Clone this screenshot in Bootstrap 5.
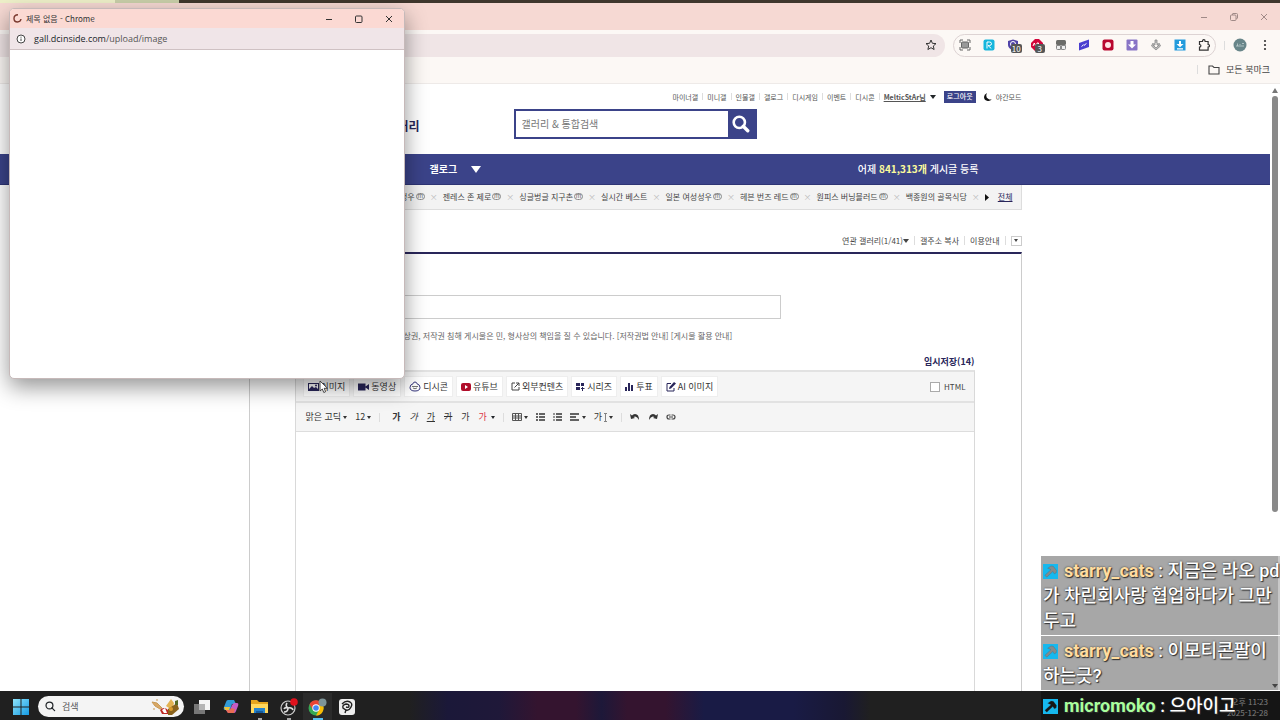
<!DOCTYPE html>
<html lang="ko">
<head>
<meta charset="utf-8">
<meta name="viewport" content="width=device-width, initial-scale=1">
<title>갤러리 글쓰기</title>
<link href="https://cdn.jsdelivr.net/npm/bootstrap@5.3.0/dist/css/bootstrap.min.css" rel="stylesheet">
<style>
:root { --navy:#3b4389; --ink:#29265a; }
body { font-family:"Noto Sans CJK KR",sans-serif; font-size:8px; line-height:12px; color:#444; background:#fff; }
a { color:inherit; text-decoration:none; }
button { border:0; background:none; padding:0; color:inherit; font:inherit; line-height:inherit; }
svg { display:block; flex-shrink:0; }
.wallpaper { height:3px; background:linear-gradient(90deg,#eef0c9 0 9%,#c9cfa9 9% 14%,#3f372d 14%); }
.titlebar { height:27px; background:#f6d9d3; color:#a08a87; padding-right:11px; gap:20px; }
.toolbar { height:30px; background:#fcf8f5; padding-right:9px; color:#333; }
.address { height:23px; border-radius:0 12px 12px 0; background:#f0e5e6; padding-right:8px; }
.extensions { height:23px; border:1px solid #ddd3d3; border-radius:12px; width:263px; padding:0 5px; }
.ext { width:12px; height:12px; position:relative; }
.ext .count { position:absolute; left:4px; top:5px; min-width:10px; height:9px; border-radius:2px; background:#555; color:#fff; font-size:8px; line-height:9px; text-align:center; padding:0 1px; }
.bookmarks { height:24px; background:#fcf8f5; border-bottom:1px solid #eeeae8; padding-right:10px; gap:6px; font-size:9px; }
.vline { width:1px; height:9px; background:#ddd; flex-shrink:0; }
.site-wrap { width:62%; min-width:773px; max-width:773px; }
.site-head { height:70px; }
.toplinks { gap:4px; color:#555; height:25px; font-size:7px; }
.toplinks .vline { height:7px; }
.logout { background:var(--navy); color:#fff; height:12px; width:32px; line-height:11px; font-weight:500; }
.logo { width:171px; color:var(--ink); font-size:12px; font-weight:700; padding-top:3px; }
.search { width:243px; height:30px; border:2px solid var(--navy); margin-left:94px; background:var(--navy); }
.search input { border:0; font-size:10px; padding:0 6px; color:#444; outline:0; border-radius:0; }
.search input::placeholder { color:#777; opacity:1; }
.search button { width:27px; display:grid; place-items:center; }
.mainnav { height:31px; background:var(--navy); border-bottom:1px solid #2e3474; color:#fff; font-size:10px; font-weight:500; }
.mainnav b { color:#fbfb9c; }
.mainnav .entry { padding-left:181px; gap:14px; font-weight:700; }
.mainnav .total { padding-right:43px; }
.recent { height:25px; background:#f3f3f3; border:1px solid #ddd; border-top:0; padding:0 8px; gap:5px; white-space:nowrap; overflow:hidden; }
.recent i { font-style:normal; color:#bbb; }
.mini { display:inline-block; width:9px; height:7px; border:1px solid #888; border-radius:4px; font-size:6px; line-height:4px; text-align:center; margin-left:1px; vertical-align:2px; color:#666; }
.gallery-links { height:42px; padding:23px 0 4px; gap:5px; }
.more { width:11px; height:10px; border:1px solid #ccc; display:grid; place-items:center; }
.board { border:1px solid #ccc; border-top:2px solid var(--ink); border-bottom:0; padding:41px 46px 0 45px; }
.subject { width:486px; height:24px; border:1px solid #ccc; border-radius:0; }
.notice { padding-top:11px; height:36px; color:#666; white-space:nowrap; }
.drafts { color:var(--ink); font-size:9px; font-weight:700; height:15px; line-height:13px; }
.editor { border:1px solid #d9d9d9; border-top:2px solid #e2e2e2; border-bottom:0; }
.attach { background:#f5f5f5; height:31px; gap:3px; padding:0 8px 0 7px; border-bottom:2px solid #e2e2e2; }
.attach button { background:#fff; border:1px solid #eee; height:21px; padding:0 4px; font-size:9px; display:flex; align-items:center; gap:2px; white-space:nowrap; color:#333; }
.attach input { width:10px; height:10px; appearance:none; border:1px solid #aaa; background:#fff; margin:0; }
.format { background:#f5f5f5; height:29px; border-bottom:1px solid #ddd; padding-left:10px; font-size:9px; color:#333; }
.format button { display:flex; align-items:center; gap:2px; white-space:nowrap; }
.letters { gap:9px; }
.caret { width:0; height:0; border:2px solid transparent; border-top:3px solid currentColor; border-bottom:0; flex-shrink:0; }
.caret-lg { border-width:3px; border-top-width:4px; border-bottom:0; }
.track { width:10px; padding:4px 2px 0; gap:3px; background:#fff; }
.thumb { flex:0 0 69%; width:6px; border-radius:3px; background:#898989; }
.popup { position:absolute; left:9px; top:8px; width:396px; height:371px; background:#fff; border:1px solid #c6b9b9; border-radius:5px; box-shadow:0 8px 22px rgba(0,0,0,.42); overflow:hidden; z-index:5; }
.popup-title { height:19px; background:#fbd9d3; color:#333; padding:0 10px 0 3px; gap:4px; }
.popup-url { height:22px; background:#f0e5e8; border-bottom:1px solid #cfc1c3; padding-left:6px; gap:8px; font-size:9px; color:#555; font-family:"Open Sans",sans-serif; }
.window-buttons { gap:20px; }
.pointer { position:absolute; left:319px; top:380px; z-index:8; }
.taskbar { height:29px; background:linear-gradient(90deg,#202020 32%,#1b1839 35%,#1f1839 39%,#34142f 42%,#34142f 45%,#1d1839 47%,#34142f 49%,#34142f 52%,#191b45 55%,#191b45 62%,#191833 66%,#202020 68%); color:#fff; padding:2px 12px 0 13px; }
.tasksearch { width:146px; height:21px; border-radius:11px; background:#f4f4f4; padding:0 4px 0 7px; margin:0 3px 0 9px; gap:6px; }
.tasksearch input { width:70px; border:0; background:transparent; padding:0; font-size:9px; outline:0; }
.tasksearch input::placeholder { color:#555; opacity:1; }
.task { width:29px; height:27px; display:grid; place-items:center; }
.task.running { background:linear-gradient(#aaa,#aaa) center bottom/4px 2px no-repeat; }
.task.current { background:linear-gradient(#58bff0,#58bff0) center bottom/10px 2px no-repeat,#2b2b2b; }
.clock { font-size:8px; line-height:11px; color:#eee; text-align:right; }
.chat { position:absolute; right:0; bottom:0; width:239px; z-index:10; font-family:Roboto,"Noto Sans CJK KR",sans-serif; font-size:18px; line-height:25px; font-weight:500; color:#fff; text-shadow:0 0 2px #333,1px 1px 1px #333; }
.msg { background:#a7a7a7; padding:2px 0 2px 2px; border-right:2px solid #c8c8c8; margin-bottom:1px; white-space:nowrap; }
.msg.dark { background:rgba(10,10,10,.5); height:29px; border:0; margin-bottom:0; }
.msg b { color:#ffdc9f; font-weight:700; }
.msg.dark b { color:#a9ff9d; }
.msg svg { display:inline-block; vertical-align:-2px; margin-right:6px; color:#848b8c; }
.msg.dark svg { color:#161616; }
.chat-scroll { position:absolute; right:2px; bottom:32px; border-width:3px; border-top:4px solid #444; border-bottom:0; }
</style>
<script src="https://cdn.jsdelivr.net/npm/bootstrap@5.3.0/dist/js/bootstrap.bundle.min.js"></script>
</head>
<body class="vh-100 overflow-hidden d-flex flex-column position-relative">
<svg width="0" height="0" class="position-absolute">
<symbol id="hammer" viewBox="0 0 16 16"><path fill="#16b8ee" d="M0 0h16v16H0z"/><path fill="currentColor" stroke="#28536a" stroke-opacity=".5" stroke-width=".500" d="M5 4.500L8.500 2l2.500.500L14.500 7l-.500 2.500-2 1-1.500-2.500L4 14l-2-2 6.500-6z"/></symbol>
<symbol id="glass" viewBox="0 0 16 16"><circle cx="6.500" cy="6.500" r="5" fill="none" stroke="currentColor" stroke-width="var(--s,2.300)"/><path d="M10 10l4 4" stroke="currentColor" stroke-width="var(--s,3)" stroke-linecap="round"/></symbol>
<symbol id="min" viewBox="0 0 10 10"><path d="M2 5.500h6" stroke="currentColor"/></symbol>
<symbol id="close" viewBox="0 0 10 10"><path d="M2 2l6 6M8 2L2 8" stroke="currentColor"/></symbol>
</svg>
<div class="wallpaper flex-shrink-0"></div>
<header class="titlebar d-flex justify-content-end align-items-center flex-shrink-0">
<button aria-label="최소화"><svg width="10" height="10"><use href="#min"/></svg></button>
<button aria-label="복원"><svg width="10" height="10" viewBox="0 0 10 10" fill="none" stroke="currentColor"><rect x="1.500" y="3" width="5.500" height="5.500" rx="1"/><path d="M3.500 3V2q0-.500.500-.500h3.500q1 0 1 1V6q0 .700-1.200.700"/></svg></button>
<button aria-label="닫기"><svg width="10" height="10"><use href="#close"/></svg></button>
</header>
<div class="toolbar d-flex align-items-center flex-shrink-0">
<div class="address flex-grow-1 d-flex justify-content-end align-items-center"><button aria-label="북마크"><svg width="12" height="12" viewBox="0 0 12 12"><path d="M6 1l1.400 3.300 3.600.300-2.700 2.400.800 3.500L6 8.700l-3.100 1.800.800-3.500L1 4.600l3.600-.300z" fill="none" stroke="#333"/></svg></button></div>
<div class="extensions d-flex align-items-center justify-content-between mx-2">
<span class="ext"><svg width="12" height="12" viewBox="0 0 12 12"><path d="M1 4V1h3M8 1h3v3M11 8v3H8M4 11H1V8" fill="none" stroke="#666"/><rect x="2.500" y="3" width="7" height="6" rx="1" fill="#999" stroke="#666"/></svg></span>
<span class="ext"><svg width="12" height="12" viewBox="0 0 12 12"><rect x=".500" y=".500" width="11" height="11" rx="2" fill="#16b6dc"/><path d="M4 9.500V3h2.500q2 0 2 1.700T6.500 6.500H5l3.300 3" fill="none" stroke="#fff"/></svg></span>
<span class="ext"><svg width="12" height="12" viewBox="0 0 12 12"><path d="M1 2l5-1.500L11 2v4q0 3-5 5.500Q1 9 1 6z" fill="#5043a8"/><circle cx="6" cy="5" r="2.500" fill="none" stroke="#fff"/></svg><span class="count">10</span></span>
<span class="ext"><svg width="12" height="12" viewBox="0 0 12 12"><path d="M4 0h4l4 4v4l-4 4H4L0 8V4z" fill="#d2063a"/><path d="M2 7l1.300-3L4.600 7M6 7V4h1.500v3" stroke="#fff" fill="none"/></svg><span class="count">3</span></span>
<span class="ext"><svg width="12" height="12" viewBox="0 0 12 12"><rect x="1" y="1" width="10" height="5" rx="1.500" fill="#6b6b68"/><path d="M1.500 6.500h4v4h-3q-1 0-1-1zM6.500 6.500h4v3q0 1-1 1h-3z" fill="#eee" stroke="#888"/></svg></span>
<span class="ext"><svg width="12" height="12" viewBox="0 0 12 12"><path d="M1 4l10-3.500V8L1 11.500z" fill="#4b3fd0"/><path d="M3.500 7.500l2-1.700.5.600 2.500-2" stroke="#fff" fill="none"/></svg></span>
<span class="ext"><svg width="12" height="12" viewBox="0 0 12 12"><rect x=".500" y=".500" width="11" height="11" rx="2" fill="#b8072f"/><circle cx="6" cy="6" r="3" fill="#ffe3e6"/></svg></span>
<span class="ext"><svg width="12" height="12" viewBox="0 0 12 12"><rect x=".500" y=".500" width="11" height="11" rx="1" fill="#8874c6"/><path d="M4.500 2h3v3.500H10l-4 4-4-4h2.500z" fill="#fff"/></svg></span>
<span class="ext"><svg width="12" height="12" viewBox="0 0 12 12"><path d="M5 1h2v5h2L6 9 3 6h2zM3 4L1.500 7 6 11l4.500-4L9 4" fill="#bbb" stroke="#888" stroke-width=".800"/></svg></span>
<span class="ext"><svg width="12" height="12" viewBox="0 0 12 12"><path fill="#239bdc" d="M.500.500h11v11H.500z"/><path d="M5 2h2v3h2.500L6 8.300 2.500 5H5zM3 9.300h6v1.200H3z" fill="#fff"/></svg></span>
<span class="ext"><svg width="12" height="12" viewBox="0 0 12 12"><path d="M1.500 2.500h3q0-1.800 1.300-1.800t1.300 1.800h3v3q1.400 0 1.400 1.300t-1.400 1.300v3H1.500v-3q1.400 0 1.400-1.300T1.500 5.500z" fill="none" stroke="#333" stroke-width="1.200"/></svg></span>
</div>
<span class="vline"></span>
<button class="ms-2 me-1" aria-label="프로필"><svg width="14" height="14" viewBox="0 0 14 14"><circle cx="7" cy="7" r="6.500" fill="#688589"/><path d="M3 8h3M4.500 8V5.500M7 6v3M8 8h3M9 6l1-1 1 1" stroke="#c2d0d2" fill="none" stroke-width=".800"/></svg></button>
<button class="ms-2" aria-label="메뉴"><svg width="12" height="12" viewBox="0 0 12 12" fill="#333"><circle cx="6" cy="2" r="1.100"/><circle cx="6" cy="6" r="1.100"/><circle cx="6" cy="10" r="1.100"/></svg></button>
</div>
<div class="bookmarks d-flex justify-content-end align-items-center flex-shrink-0 pb-1">
<span class="vline me-1"></span><svg width="12" height="12" viewBox="0 0 12 12"><path d="M1 2h3.500L6 3.500h5v6.500H1z" fill="none" stroke="#444" stroke-width="1.100"/></svg><span>모든 북마크</span>
</div>

<div class="flex-grow-1 d-flex overflow-hidden">
<main class="flex-grow-1 overflow-hidden d-flex flex-column">
<div class="site-wrap mx-auto site-head w-100">
<nav class="toplinks d-flex justify-content-end align-items-center">
<a href="#">마이너갤</a><span class="vline"></span><a href="#">미니갤</a><span class="vline"></span><a href="#">인물갤</a><span class="vline"></span><a href="#">갤로그</a><span class="vline"></span><a href="#">디시게임</a><span class="vline"></span><a href="#">이벤트</a><span class="vline"></span><a href="#">디시콘</a><span class="vline"></span>
<span class="d-flex align-items-center"><a href="#" class="fw-bold text-decoration-underline">MelticStAr님</a><span class="caret caret-lg text-dark ms-1"></span></span>
<button class="logout ms-1">로그아웃</button><svg class="ms-1" width="8" height="8" viewBox="0 0 8 8"><path d="M3 0Q1 4 4.500 6 6 7 8 6 6 8.500 3 7.700 0 7 0 4 0 1.500 3 0" fill="#111"/></svg><a href="#">야간모드</a>
</nav>
<div class="d-flex align-items-center">
<div class="logo text-end">갤러리</div>
<form class="search d-flex"><input class="flex-grow-1 w-100" aria-label="검색" placeholder="갤러리 &amp; 통합검색"><button type="button" class="flex-shrink-0 text-white" aria-label="찾기"><svg width="18" height="18"><use href="#glass"/></svg></button></form>
</div>
</div>
<nav class="mainnav flex-shrink-0"><div class="site-wrap mx-auto h-100 d-flex justify-content-between align-items-center">
<a href="#" class="entry d-flex align-items-center">갤로그 <svg width="10" height="7"><path d="M0 0h10L5 7z" fill="#fff"/></svg></a>
<span class="total">어제 <b>841,313개</b> 게시글 등록</span></div></nav>
<div class="site-wrap mx-auto w-100 recent d-flex justify-content-end align-items-center flex-shrink-0">
<a href="#">남여성우<span class="mini">m</span></a><i>×</i><a href="#">젠레스 존 제로<span class="mini">m</span></a><i>×</i><a href="#">싱글벙글 지구촌<span class="mini">m</span></a><i>×</i><a href="#">실시간 베스트</a><i>×</i><a href="#">일본 여성성우<span class="mini">m</span></a><i>×</i><a href="#">헤븐 번즈 레드<span class="mini">m</span></a><i>×</i><a href="#">원피스 버닝블러드<span class="mini">m</span></a><i>×</i><a href="#">백종원의 골목식당</a><i>×</i>
<svg width="4" height="7"><path d="M0 0l4 3.500L0 7z" fill="#111"/></svg><a href="#" class="text-decoration-underline ms-1" style="color:var(--ink)">전체</a>
</div>
<div class="site-wrap mx-auto w-100 flex-grow-1 d-flex flex-column">
<nav class="gallery-links d-flex justify-content-end align-items-center flex-shrink-0">
<a href="#" class="d-flex align-items-center">연관 갤러리(1/41)<span class="caret caret-lg"></span></a><span class="vline"></span><a href="#">갤주소 복사</a><span class="vline"></span><a href="#">이용안내</a><span class="vline"></span>
<button class="more" aria-label="더보기"><span class="caret"></span></button>
</nav>
<section class="board flex-grow-1 d-flex flex-column">
<input class="subject" aria-label="제목">
<div class="notice">※ 음란물, 차별, 비하, 혐오 및 초상권, 저작권 침해 게시물은 민, 형사상의 책임을 질 수 있습니다. <a href="#">[저작권법 안내]</a> <a href="#">[게시물 활용 안내]</a></div>
<a href="#" class="drafts text-end">임시저장(14)</a>
<div class="editor flex-grow-1">
<div class="attach d-flex align-items-center">
<button><svg width="11" height="10" viewBox="0 0 11 10"><path fill="#29265a" fill-rule="evenodd" d="M0 1h11v8H0zM1 2v5l3-3 2 2 2-1 2 2V2z"/><circle cx="8" cy="3.500" r="1" fill="#29265a"/></svg>이미지</button>
<button><svg width="11" height="10" viewBox="0 0 11 10" fill="#29265a"><path d="M0 1.500h7.500v7H0zM7.500 4.500L11 2v6L7.500 5.500z"/></svg>동영상</button>
<button><svg width="12" height="11" viewBox="0 0 12 11"><path d="M6 1q1.700 0 2 1.800 3 .700 3 3.700 0 3.500-5 3.500T1 6.500Q1 3.500 4 2.800 4.300 1 6 1z" fill="none" stroke="#34347c"/><path d="M3 5.500h6M4 7q2 1.500 4 0" fill="none" stroke="#777"/></svg>디시콘</button>
<button><svg width="10" height="10" viewBox="0 0 10 10"><rect y="1" width="10" height="8" rx="2" fill="#b00d2a"/><path d="M4 3l3 2-3 2z" fill="#fff"/></svg>유튜브</button>
<button><svg width="9" height="9" viewBox="0 0 9 9"><path d="M4 1H1v7h7V5M5 1h3v3M8 1L3.500 5.500" fill="none" stroke="#444"/></svg>외부컨텐츠</button>
<button><svg width="9" height="9" viewBox="0 0 9 9" fill="#29265a"><path d="M0 1h4v3H0zM5 1h3v3H5zM0 5h4v3H0zM5 6h1V5h1v1h1.500v1H7v2H6V7H5z"/></svg>시리즈</button>
<button><svg width="9" height="9" viewBox="0 0 9 9" fill="#29265a"><path d="M0 5h2v4H0zM3 1h2v8H3zM6 3h2v6H6z"/></svg>투표</button>
<button><svg width="10" height="10" viewBox="0 0 10 10"><path d="M5 1.500H1v7.500h7V6" fill="none" stroke="#29265a"/><path d="M3 7l.500-2L8 0l2 1.500L5 6.500z" fill="#29265a"/></svg>AI 이미지</button>
<label class="ms-auto d-flex align-items-center gap-1"><input type="checkbox">HTML</label>
</div>
<div class="format d-flex align-items-center">
<button>맑은 고딕<span class="caret"></span></button><button class="ms-2">12 <span class="caret"></span></button><span class="vline mx-2"></span>
<div class="d-flex ps-1 letters"><button class="fw-bold">가</button><button class="fst-italic">가</button><button class="text-decoration-underline">가</button><button class="text-decoration-line-through">가</button><button>가</button><button class="text-danger">가</button></div>
<button class="ms-1" aria-label="색상"><span class="caret text-dark"></span></button>
<span class="vline mx-2"></span>
<div class="d-flex align-items-center gap-2">
<button aria-label="표"><svg width="10" height="8" viewBox="0 0 10 8"><path d="M.500.500h9v7h-9zM.500 3h9M.500 5h9M3.500 0v8M6.500 0v8" fill="none" stroke="#555"/></svg><span class="caret"></span></button>
<button aria-label="글머리"><svg width="9" height="8" viewBox="0 0 9 8"><path d="M0 1h2M3 1h6M0 4h2M3 4h6M0 7h2M3 7h6" stroke="#333" stroke-width="1.400"/></svg></button>
<button aria-label="번호"><svg width="9" height="8" viewBox="0 0 9 8"><path d="M3 1h6M3 4h6M3 7h6" stroke="#333" stroke-width="1.400"/><path d="M1 0v2M0 4h2M0 7h2" stroke="#333"/></svg></button>
<button aria-label="정렬"><svg width="10" height="8" viewBox="0 0 10 8"><path d="M0 1h9M0 4h6M0 7h9" stroke="#333" stroke-width="1.400"/></svg><span class="caret"></span></button>
<button>가<svg width="3" height="9" viewBox="0 0 3 9"><path d="M0 .500h3M0 8.500h3M1.500 1v7" stroke="#666" stroke-width=".800"/></svg><span class="caret"></span></button>
</div>
<span class="vline mx-2"></span>
<div class="d-flex align-items-center gap-2">
<button aria-label="실행 취소"><svg width="10" height="8" viewBox="0 0 10 8"><path d="M0 1l1 5 4-1-1.500-1q3-2 5.500 3Q9 1 5 1 3 1 2 2.500z" fill="#333"/></svg></button>
<button aria-label="다시 실행"><svg width="10" height="8" viewBox="0 0 10 8"><path d="M10 1L9 6 5 5l1.500-1Q3.500 2 1 7 1 1 5 1q2 0 3 1.500z" fill="#333"/></svg></button>
<button aria-label="링크"><svg width="10" height="8" viewBox="0 0 10 8"><path d="M4.500 6H3Q1 6 1 4t2-2h1.500M5.500 2H7q2 0 2 2T7 6H5.500M3 4h4" fill="none" stroke="#444" stroke-width="1.200"/></svg></button>
</div>
</div>
</div>
</section>
</div>
</main>
<div class="track d-flex flex-column align-items-center flex-shrink-0"><svg width="6" height="5"><path d="M3 0l3 5H0z" fill="#777"/></svg><div class="thumb"></div></div>
</div>

<footer class="taskbar d-flex align-items-center flex-shrink-0">
<button aria-label="시작"><svg width="16" height="16" viewBox="0 0 16 16"><defs><linearGradient id="w" x2="1" y2="1"><stop stop-color="#8ee4fb"/><stop offset="1" stop-color="#159be4"/></linearGradient></defs><path d="M0 0h7.500v7.500H0zM8.500 0H16v7.500H8.500zM0 8.500h7.500V16H0zM8.500 8.500H16V16H8.500z" fill="url(#w)"/></svg></button>
<div class="tasksearch d-flex align-items-center"><svg width="11" height="11" class="text-dark" style="--s:1.8"><use href="#glass" width="11" height="11"/></svg><input aria-label="작업 검색" placeholder="검색">
<svg class="ms-auto" width="29" height="17" viewBox="0 0 29 17"><path d="M1 4l5 1 5 5-2 1-5-3zM2 11h2M5 2h2" fill="#d8a866" stroke="#c99a55"/><path d="M9 12q4-4 8 0l1 4h-7z" fill="#bd2925"/><path d="M11 12l3-2 2 5h-3z" fill="#fff"/><path d="M15 8l5-7 3 4-2 7z" fill="#e3b353"/><path d="M17 11l9-6 2 6-7 6h-4z" fill="#8a631d"/><path d="M24 3l3-1v5h-3z" fill="#556a25"/><circle cx="20" cy="11" r="2" fill="#d89b2c"/></svg></div>
<button class="task" aria-label="작업 보기"><svg width="16" height="14" viewBox="0 0 16 14"><path fill="#f5f5f5" d="M5 0h11v10H5z"/><path fill="#777" d="M0 4h11v10H0z"/><path fill="#b5b5b5" d="M5 4h6v6H5z"/></svg></button>
<button class="task" aria-label="Copilot"><svg width="16" height="15" viewBox="0 0 16 15"><path d="M5 1h6l2 4H9L7 11H2Q0 11 1 8l2-5q.500-2 2-2z" fill="#309bd8"/><path d="M1 8h6l-1 3H2z" fill="#e9c23f"/><path d="M11 4h3q2 0 1 3l-2 5q-.500 2-2 2H5l-2-3h4l2-5z" fill="#c35cc4"/><path d="M5 14l-2-3h4l1-2 4 1-1 4z" fill="#e86c54"/></svg></button>
<button class="task running" aria-label="파일 탐색기"><svg width="17" height="15" viewBox="0 0 17 15"><path d="M0 1h6l2 2h9v11H0z" fill="#e5a51e"/><path d="M0 5h17v9H0z" fill="#ffd75c"/><path d="M3 9h11v5H3z" fill="#2583cd"/><path d="M5 12h7v2H5z" fill="#165a9b"/></svg></button>
<button class="task running" aria-label="OBS"><svg width="18" height="18" viewBox="0 0 18 18"><circle cx="8" cy="10" r="7" fill="#222" stroke="#ccc" stroke-width="1.200"/><path d="M7 5q-2 3 1 5 4-1 5 2M8 10q0 4-4 4M8 10q-3-1-4 1" stroke="#ddd" fill="none" stroke-width="1.600"/><circle cx="14" cy="4" r="3.800" fill="#df111c"/></svg></button>
<button class="task current" aria-label="Chrome"><svg width="19" height="18" viewBox="0 0 19 18"><circle cx="8" cy="10" r="7.500" fill="#35a853"/><path d="M1.500 6.200A7.500 7.500 0 0 1 15 7H8L5 12z" fill="#ea4335"/><path d="M15 7a7.500 7.500 0 0 1-7 10.500L11 12V7z" fill="#fbbc05"/><circle cx="8" cy="10" r="3.700" fill="#fff"/><circle cx="8" cy="10" r="2.800" fill="#4285f4"/><circle cx="14.500" cy="4.500" r="4" fill="#7e9599"/></svg></button>
<button class="task" aria-label="Clip Studio"><svg width="16" height="16" viewBox="0 0 16 16"><rect width="16" height="16" rx="3" fill="#eee"/><path d="M3 5q4-4 8-2 3 2 1 5-2 4-5 3L4 9q-1-3 3-4 3 0 3 2T7 8M7 11l-1 3" stroke="#222" stroke-width="1.400" fill="none"/></svg></button>
<div class="clock ms-auto">오후 11:23<br>2025-12-28</div>
</footer>

<section class="popup">
<div class="popup-title d-flex align-items-center"><svg width="9" height="9" viewBox="0 0 9 9"><path d="M5 .800Q1 1 1 4.500 1 8 4.500 8 7.500 8 8 5" fill="none" stroke="#7b3a30" stroke-width="1.400"/></svg><span>제목 없음 - Chrome</span>
<div class="ms-auto d-flex window-buttons"><button aria-label="최소화"><svg width="10" height="10"><use href="#min"/></svg></button><button aria-label="최대화"><svg width="10" height="10" viewBox="0 0 10 10"><rect x="1.500" y="2" width="6.500" height="6.500" rx="1" fill="none" stroke="currentColor"/></svg></button><button aria-label="닫기"><svg width="10" height="10"><use href="#close"/></svg></button></div></div>
<div class="popup-url d-flex align-items-center"><svg width="10" height="10" viewBox="0 0 10 10"><circle cx="5" cy="5" r="4" fill="#fff" stroke="#444"/><path d="M5 4.500V7M5 2.700v1" stroke="#444"/></svg><span><span class="text-dark">gall.dcinside.com</span>/upload/image</span></div>
</section>
<svg class="pointer" width="10" height="14" viewBox="0 0 10 14"><path d="M1 1v10l2.300-2 1.500 3.500 1.800-.800L5.200 8.300H8.500z" fill="#fff" stroke="#333" stroke-width=".900"/></svg>

<aside class="chat">
<div class="msg"><svg width="15" height="15"><use href="#hammer"/></svg><b>starry_cats</b> : 지금은 라오 pd<br>가 차린회사랑 협업하다가 그만<br>두고</div>
<div class="msg"><svg width="15" height="15"><use href="#hammer"/></svg><b>starry_cats</b> : 이모티콘팔이<br>하는긋?</div>
<div class="msg dark"><svg width="15" height="15"><use href="#hammer"/></svg><b>micromoko</b> : 으아이고</div>
<span class="caret chat-scroll"></span>
</aside>
</body>
</html>
